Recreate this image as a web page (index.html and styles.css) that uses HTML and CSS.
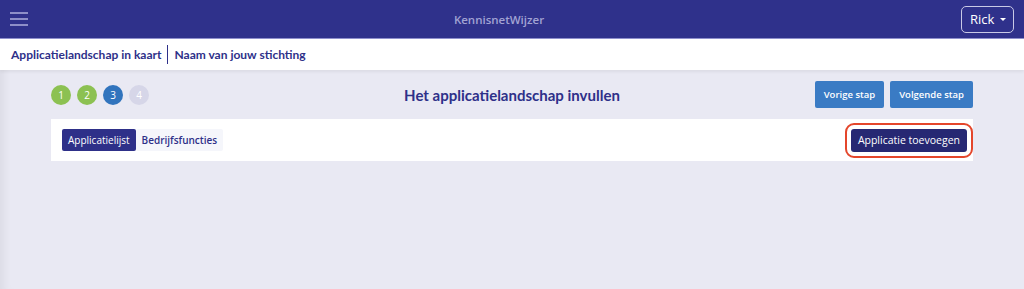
FILE: index.html
```html
<!DOCTYPE html>
<html lang="nl">
<head>
<meta charset="utf-8">
<link rel="stylesheet" href="styles.css">
</head>
<body>
<header class="navbar">
  <button class="hamburger" aria-label="menu">
    <svg width="20" height="14" viewBox="0 0 20 14"><g stroke="#a7a8d8" stroke-width="1.6"><line x1="0" y1="1" x2="18" y2="1"/><line x1="0" y1="7" x2="18" y2="7"/><line x1="0" y1="13" x2="18" y2="13"/></g></svg>
  </button>
  <div class="brand">KennisnetWijzer</div>
  <button class="user">Rick <span class="caret"></span></button>
</header>
<div class="subheader">
  <span>Applicatielandschap in kaart</span><span class="sep"></span><span>Naam van jouw stichting</span>
</div>
<main class="page">
  <div class="container">
    <div class="steprow">
      <div class="steps">
        <span class="step done">1</span>
        <span class="step done">2</span>
        <span class="step current">3</span>
        <span class="step todo">4</span>
      </div>
      <h1 class="title">Het applicatielandschap invullen</h1>
      <div class="nav-buttons">
        <button class="btn-step">Vorige stap</button>
        <button class="btn-step">Volgende stap</button>
      </div>
    </div>
    <div class="card">
      <div class="tabs">
        <button class="tab active">Applicatielijst</button>
        <button class="tab">Bedrijfsfuncties</button>
      </div>
      <button class="btn-add">Applicatie toevoegen</button>
    </div>
  </div>
</main>
</body>
</html>
```

FILE: styles.css
```css
* { box-sizing: border-box; }
html, body { margin: 0; padding: 0; }
body {
  font-family: "Open Sans", "Noto Sans", sans-serif;
  background: #e9e9f3;
  height: 289px;
  overflow: hidden;
  box-shadow: inset 10px 0 8px -6px rgba(0,0,0,0.06);
}
button { font-family: inherit; cursor: pointer; }

.navbar {
  height: 39px;
  background: #2f318b;
  border-bottom: 1px solid #8e8fcc;
  display: flex;
  align-items: center;
  justify-content: space-between;
  padding: 0 10px 0 10px;
  position: relative;
}
.hamburger {
  background: none;
  border: none;
  padding: 0;
  width: 20px;
  height: 16px;
  display: flex;
  align-items: center;
}
.brand {
  position: absolute;
  left: 0; right: 26px;
  text-align: center;
  color: #a2a3d3;
  font-size: 11.5px;
  font-weight: 600;
  pointer-events: none;
}
.user {
  background: transparent;
  border: 1px solid #c9c9e6;
  border-radius: 5px;
  color: #fff;
  font-size: 13px;
  height: 27px;
  width: 53px;
  padding: 0 0 0 8px;
  display: flex;
  align-items: center;
  gap: 6px;
}
.caret {
  width: 0; height: 0;
  border-left: 3.5px solid transparent;
  border-right: 3.5px solid transparent;
  border-top: 3.5px solid #fff;
}

.subheader {
  height: 31px;
  background: #fff;
  display: flex;
  align-items: center;
  padding: 0 11px;
  color: #2e3089;
  font-family: "Lato", sans-serif;
  font-weight: 700;
  font-size: 12px;
  box-shadow: 0 2px 3px rgba(0,0,0,0.06);
  position: relative;
}
.sep {
  display: inline-block;
  width: 1px;
  height: 19px;
  background: #2e3089;
  margin: 0 6px;
}

.container {
  width: 922px;
  margin: 0 auto;
  padding-top: 11px;
}
.steprow {
  display: flex;
  align-items: center;
  justify-content: space-between;
  height: 27px;
  position: relative;
}
.steps { display: flex; gap: 6px; }
.step {
  width: 20px; height: 20px;
  border-radius: 50%;
  color: #fff;
  font-size: 10px;
  display: flex;
  align-items: center;
  justify-content: center;
}
.step.done { background: #8cc152; }
.step.current { background: #3174bd; }
.step.todo { background: #d6d6e8; }
.title {
  position: absolute;
  left: 0; right: 0;
  text-align: center;
  margin: 0;
  font-family: "Lato", sans-serif;
  font-size: 15px;
  font-weight: 700;
  color: #2e3089;
  pointer-events: none;
}
.nav-buttons { display: flex; gap: 6px; }
.btn-step {
  height: 27px;
  border: none;
  border-radius: 2px;
  background: #3a7bc4;
  color: #fff;
  font-size: 9.5px;
  font-weight: 600;
  padding: 0 9px;
}

.card {
  margin-top: 11px;
  background: #fff;
  height: 42px;
  display: flex;
  align-items: center;
  justify-content: space-between;
  padding: 0 6px 0 11px;
}
.tabs { display: flex; }
.tab {
  height: 22px;
  border: none;
  border-radius: 2px;
  font-size: 10px;
  padding: 0 6px;
  background: #f5f6fb;
  color: #2e3089;
  font-weight: 600;
}
.tab.active {
  background: #2e3089;
  color: #fff;
  font-weight: 400;
}
.btn-add {
  height: 23px;
  border: none;
  border-radius: 3px;
  background: #262873;
  color: #fff;
  font-size: 10.5px;
  padding: 0 7px;
  outline: 2px solid #e4462b;
  outline-offset: 4px;
}
```
